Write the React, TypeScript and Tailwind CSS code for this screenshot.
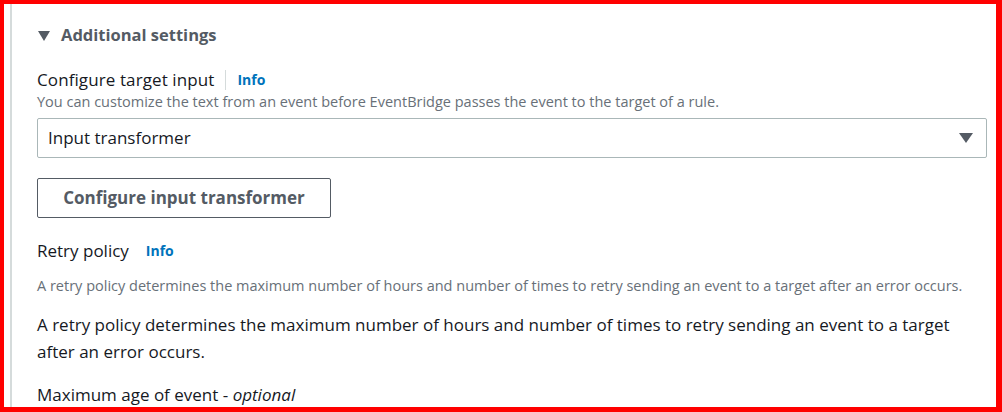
const font = { fontFamily: '"Open Sans", "Noto Sans", sans-serif' };

function InfoLink() {
  return <span className="text-[14px] font-bold text-[#0073bb]">Info</span>;
}

export default function App() {
  return (
    <div
      className="h-[412px] w-[1002px] overflow-hidden border-t-4 border-r-[6px] border-b-[5px] border-l-4 border-[#ff0000] bg-white"
      style={font}
    >
      <div className="h-full pl-[6px]">
        <div className="h-full border-l-2 border-[#d5dbdb] pl-[25px] pr-[9px] pt-[18px]">
          <div className="flex items-center gap-[11px] text-[16.5px] font-bold leading-[26px] text-[#545b64]">
            <svg width="12" height="10" viewBox="0 0 12 10" className="mt-[1px] ml-[1px]">
              <path d="M0 0h12L6 10z" fill="#545b64" />
            </svg>
            <span>Additional settings</span>
          </div>

          <div className="mt-[21px] flex items-center text-[17px] leading-[22px] text-[#16191f]">
            <span className="tracking-[0.1px]">Configure target input</span>
            <span className="mx-[11px] h-[20px] w-px bg-[#d5dbdb]" />
            <InfoLink />
          </div>
          <p className="mt-[1px] text-[14.5px] leading-[20px] text-[#687078]">
            You can customize the text from an event before EventBridge passes the event to the target of a rule.
          </p>

          <div className="mt-[6px] flex h-[40px] items-center justify-between rounded-[2px] border border-[#aab7b8] pl-[10px] pr-[13px] text-[17px] text-[#16191f]">
            <span>Input transformer</span>
            <svg width="14" height="10" viewBox="0 0 14 10">
              <path d="M0 0h14L7 10z" fill="#545b64" />
            </svg>
          </div>

          <button className="mt-[20px] flex h-[40px] w-[294px] items-center justify-center rounded-[2px] border border-[#545b64] text-[17px] font-bold text-[#545b64]">
            Configure input transformer
          </button>

          <div className="mt-[22px] flex items-center gap-[17px] text-[17px] leading-[22px] text-[#16191f]">
            <span>Retry policy</span>
            <InfoLink />
          </div>
          <p className="mt-[14px] text-[14.5px] leading-[20px] text-[#687078]">
            A retry policy determines the maximum number of hours and number of times to retry sending an event to a target after an error occurs.
          </p>
          <p className="mt-[15px] text-[17px] leading-[27px] text-[#16191f]">
            A retry policy determines the maximum number of hours and number of times to retry sending an event to a target after an error occurs.
          </p>
          <p className="mt-[19px] text-[17px] leading-[22px] text-[#16191f]">
            Maximum age of event - <i>optional</i>
          </p>
        </div>
      </div>
    </div>
  );
}
